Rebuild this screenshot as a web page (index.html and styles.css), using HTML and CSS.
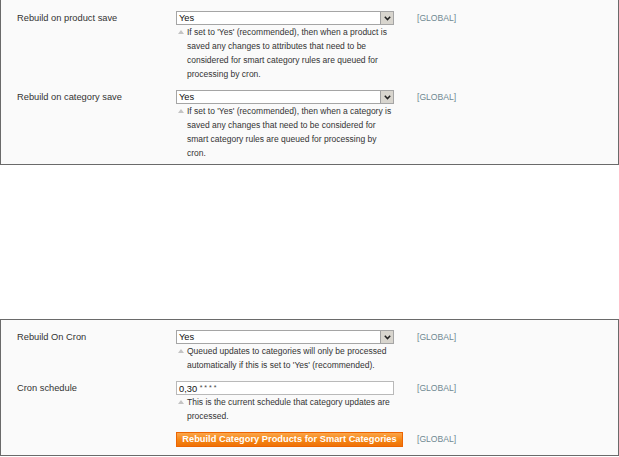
FILE: index.html
```html
<!DOCTYPE html>
<html>
<head>
<meta charset="utf-8">
<link rel="stylesheet" href="styles.css">
</head>
<body>
<div class="page">
  <section class="panel panel-first">
    <div class="row">
      <div class="label">Rebuild on product save</div>
      <div class="value">
        <div class="select"><span class="select-text">Yes</span><span class="select-btn"><svg width="7" height="5" viewBox="0 0 7 5"><path d="M0.8 0.8 L3.5 3.6 L6.2 0.8" fill="none" stroke="#222" stroke-width="1.5"/></svg></span></div>
        <p class="note">If set to 'Yes' (recommended), then when a product is saved any changes to attributes that need to be considered for smart category rules are queued for processing by cron.</p>
      </div>
      <div class="scope">[GLOBAL]</div>
    </div>
    <div class="row">
      <div class="label">Rebuild on category save</div>
      <div class="value">
        <div class="select"><span class="select-text">Yes</span><span class="select-btn"><svg width="7" height="5" viewBox="0 0 7 5"><path d="M0.8 0.8 L3.5 3.6 L6.2 0.8" fill="none" stroke="#222" stroke-width="1.5"/></svg></span></div>
        <p class="note">If set to 'Yes' (recommended), then when a category is saved any changes that need to be considered for smart category rules are queued for processing by cron.</p>
      </div>
      <div class="scope">[GLOBAL]</div>
    </div>
  </section>

  <section class="panel panel-second">
    <div class="row">
      <div class="label">Rebuild On Cron</div>
      <div class="value">
        <div class="select"><span class="select-text">Yes</span><span class="select-btn"><svg width="7" height="5" viewBox="0 0 7 5"><path d="M0.8 0.8 L3.5 3.6 L6.2 0.8" fill="none" stroke="#222" stroke-width="1.5"/></svg></span></div>
        <p class="note">Queued updates to categories will only be processed automatically if this is set to 'Yes' (recommended).</p>
      </div>
      <div class="scope">[GLOBAL]</div>
    </div>
    <div class="row">
      <div class="label">Cron schedule</div>
      <div class="value">
        <div class="input">0,30 <span class="stars">* * * *</span></div>
        <p class="note">This is the current schedule that category updates are processed.</p>
      </div>
      <div class="scope">[GLOBAL]</div>
    </div>
    <div class="row row-last">
      <div class="label"></div>
      <div class="value">
        <button class="btn" type="button">Rebuild Category Products for Smart Categories</button>
      </div>
      <div class="scope">[GLOBAL]</div>
    </div>
  </section>
</div>
</body>
</html>
```
FILE: styles.css
```css
html, body {
  margin: 0;
  padding: 0;
  background: #ffffff;
}

body {
  font-family: "Liberation Sans", Arial, sans-serif;
  color: #333333;
}

.page {
  width: 619px;
  display: flex;
  flex-direction: column;
}

.panel {
  background: #fafafa;
  border: 1px solid #6a6a6a;
  padding: 10px 0 8px 16px;
}

.panel-first {
  border-top: none;
  padding-top: 11px;
  padding-bottom: 4px;
}

.panel-second {
  margin-top: 154px;
}

.row {
  display: grid;
  grid-template-columns: 136px 218px auto;
  column-gap: 23px;
  align-items: start;
  margin-bottom: 9px;
}

.row:last-child {
  margin-bottom: 0;
}

.label {
  font-size: 9.3px;
  line-height: 14px;
  color: #333333;
}

.value {
  display: flex;
  flex-direction: column;
}

.select {
  height: 14px;
  box-sizing: border-box;
  border: 1px solid #a5a5a5;
  background: #ffffff;
  display: flex;
  align-items: stretch;
}

.select-text {
  flex: 1;
  font-size: 9.3px;
  line-height: 12px;
  padding-left: 2px;
  color: #111111;
}

.select-btn {
  width: 12px;
  background: #d8d5ce;
  border-left: 1px solid #a0a0a0;
  display: flex;
  align-items: center;
  justify-content: center;
}

.input {
  height: 14px;
  box-sizing: border-box;
  border: 1px solid #b9b9b9;
  background: #ffffff;
  font-size: 9.3px;
  line-height: 12px;
  padding-left: 2px;
  color: #111111;
}

.stars {
  font-size: 7px;
  vertical-align: 2px;
  color: #444444;
}

.note {
  position: relative;
  margin: 0;
  padding-left: 11px;
  font-size: 8.5px;
  line-height: 14px;
  color: #333333;
}

.note::before {
  content: "";
  position: absolute;
  left: 2px;
  top: 5px;
  border-left: 3px solid transparent;
  border-right: 3px solid transparent;
  border-bottom: 4px solid #c4c4c4;
}

.scope {
  font-size: 8.6px;
  line-height: 14px;
  color: #6f8992;
}

.row-last .scope {
  line-height: 15px;
}

.btn {
  height: 15px;
  box-sizing: border-box;
  align-self: flex-start;
  width: 227px;
  margin: 0;
  padding: 0 4px;
  border: 1px solid #ed6502;
  background: linear-gradient(#fba54a, #f58513 55%, #ee7108);
  color: #ffffff;
  font-family: "Liberation Sans", Arial, sans-serif;
  font-weight: bold;
  font-size: 9.3px;
  line-height: 13px;
  white-space: nowrap;
}
```
